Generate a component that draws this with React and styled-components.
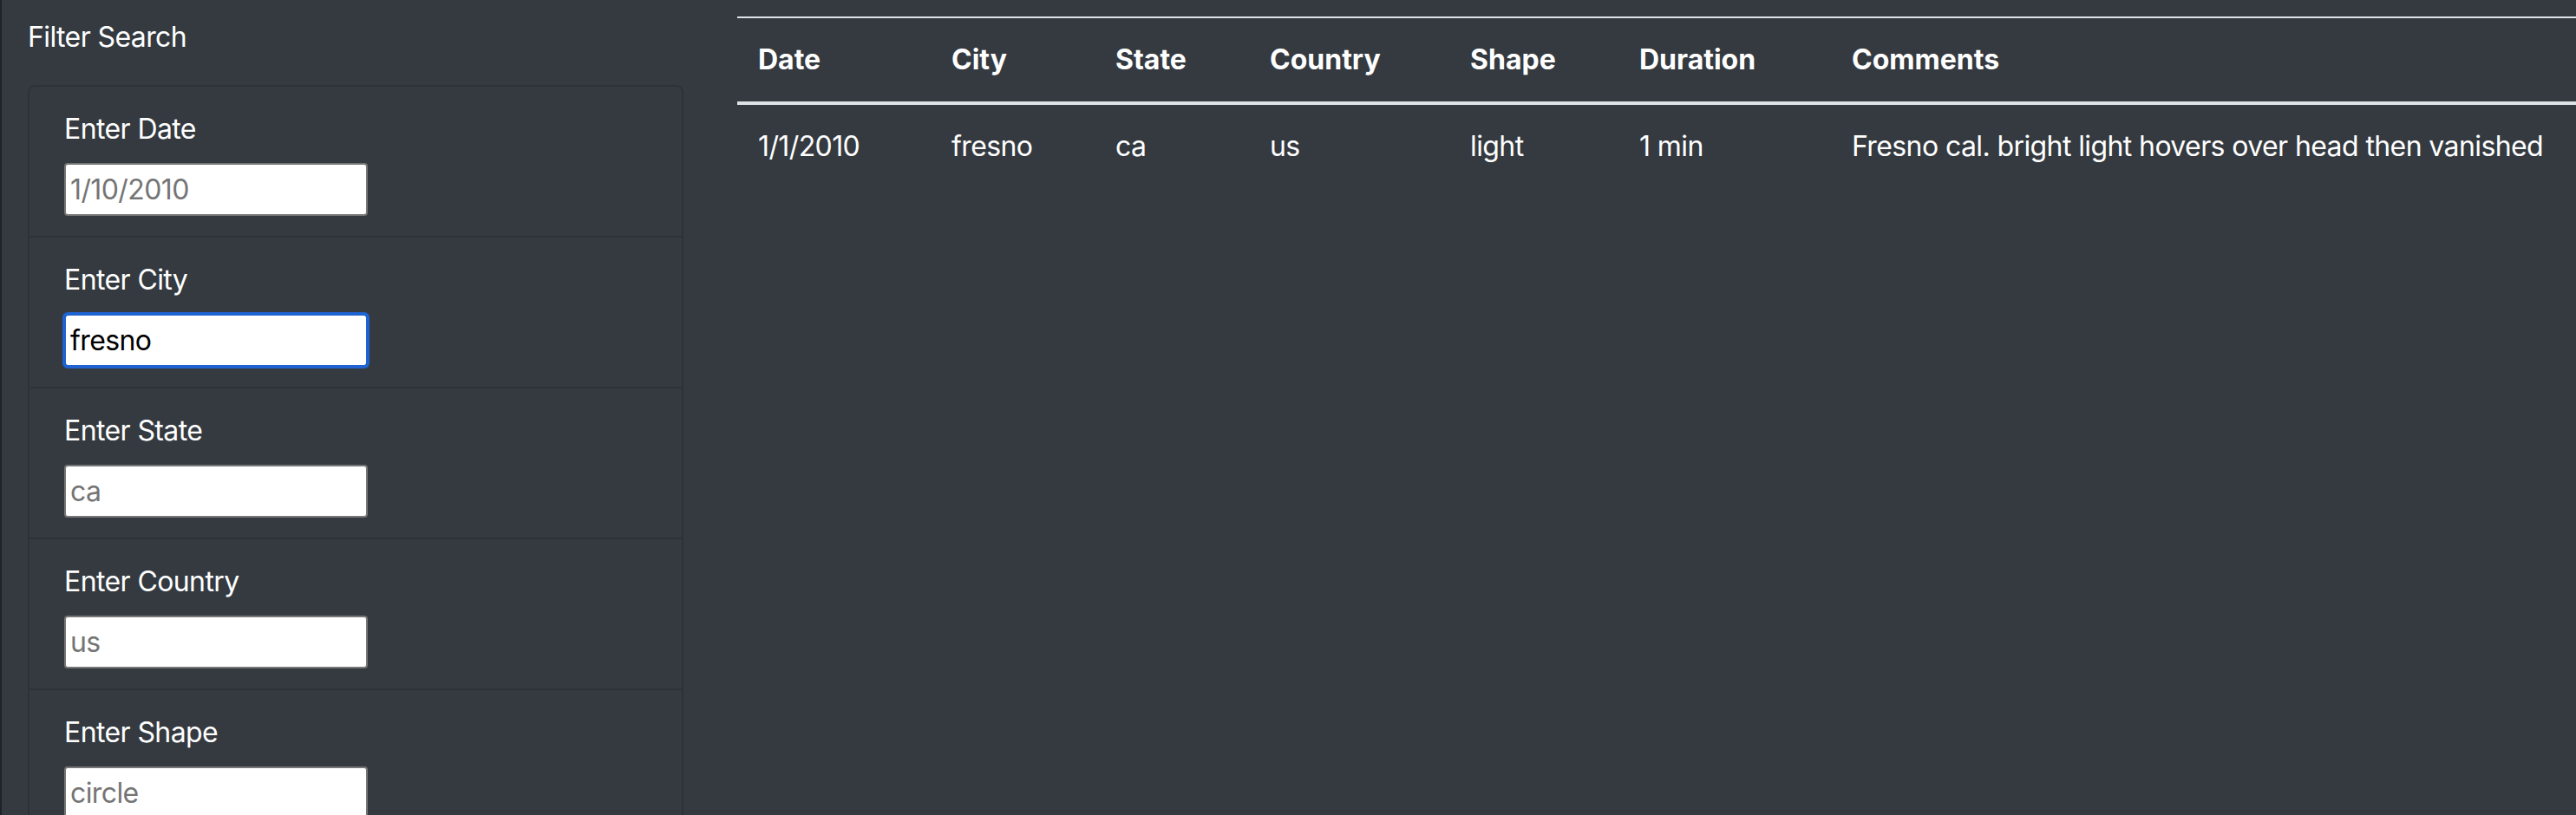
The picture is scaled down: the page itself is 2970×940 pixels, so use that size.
import React from "react";
import styled, { createGlobalStyle } from "styled-components";

const GlobalStyle = createGlobalStyle`
  html, body {
    margin: 0;
    padding: 0;
    background: #343a40;
    overflow: hidden;
  }
  * {
    box-sizing: border-box;
  }
`;

const Page = styled.div`
  display: flex;
  width: 2970px;
  height: 940px;
  background: #343a40;
  border-left: 2px solid #1f2226;
  font-family: "Inter", "Liberation Sans", sans-serif;
  letter-spacing: -0.6px;
  color: #ffffff;
  overflow: hidden;
`;

const Sidebar = styled.aside`
  flex: 0 0 848px;
  padding: 19px 0 0 30px;
`;

const Heading = styled.h4`
  margin: 0 0 31px;
  font-size: 32px;
  font-weight: 400;
  line-height: 48px;
`;

const FilterList = styled.ul`
  width: 756px;
  margin: 0;
  padding: 0;
  list-style: none;
  border: 2px solid rgba(0, 0, 0, 0.125);
  border-radius: 8px;
`;

const FilterItem = styled.li`
  padding: 25px 40px 23px 40px;
  border-top: ${(p) => (p.$first ? "none" : "2px solid rgba(0, 0, 0, 0.125)")};
`;

const Label = styled.label`
  display: block;
  margin-bottom: 15px;
  font-size: 32px;
  line-height: 48px;
`;

const Input = styled.input`
  display: block;
  width: 350px;
  height: 61px;
  padding: 0 5px;
  border: 2px solid #767676;
  border-radius: 4px;
  background: #ffffff;
  color: #000000;
  font-family: inherit;
  font-size: 32px;
  letter-spacing: -0.6px;
  outline: ${(p) => (p.$focused ? "4px solid #1f63d0" : "none")};
  outline-offset: -2px;

  &::placeholder {
    color: #757575;
  }
`;

const Main = styled.main`
  flex: 1;
  padding-top: 19px;
`;

const Table = styled.table`
  width: 100%;
  border-collapse: collapse;
  table-layout: fixed;
`;

const Th = styled.th`
  width: ${(p) => p.$w || "auto"};
  padding: 24px;
  border-top: 2px solid #dee2e6;
  border-bottom: 4px solid #dee2e6;
  text-align: left;
  font-size: 32px;
  font-weight: 700;
  line-height: 48px;
  letter-spacing: 0;
`;

const Td = styled.td`
  padding: 24px;
  font-size: 32px;
  line-height: 48px;
  white-space: nowrap;
`;

const filters = [
  { label: "Enter Date", placeholder: "1/10/2010" },
  { label: "Enter City", value: "fresno", focused: true },
  { label: "Enter State", placeholder: "ca" },
  { label: "Enter Country", placeholder: "us" },
  { label: "Enter Shape", placeholder: "circle" },
];

const columns = [
  { name: "Date", w: "223px" },
  { name: "City", w: "189px" },
  { name: "State", w: "178px" },
  { name: "Country", w: "231px" },
  { name: "Shape", w: "195px" },
  { name: "Duration", w: "245px" },
  { name: "Comments" },
];

const rows = [
  ["1/1/2010", "fresno", "ca", "us", "light", "1 min", "Fresno cal. bright light hovers over head then vanished"],
];

export default function App() {
  return (
    <>
      <GlobalStyle />
      <Page>
        <Sidebar>
          <Heading>Filter Search</Heading>
          <FilterList>
            {filters.map((f, i) => (
              <FilterItem key={f.label} $first={i === 0}>
                <Label>{f.label}</Label>
                <Input
                  type="text"
                  placeholder={f.placeholder}
                  defaultValue={f.value}
                  $focused={f.focused}
                />
              </FilterItem>
            ))}
          </FilterList>
        </Sidebar>
        <Main>
          <Table>
            <thead>
              <tr>
                {columns.map((c) => (
                  <Th key={c.name} $w={c.w}>
                    {c.name}
                  </Th>
                ))}
              </tr>
            </thead>
            <tbody>
              {rows.map((r, i) => (
                <tr key={i}>
                  {r.map((cell, j) => (
                    <Td key={j}>{cell}</Td>
                  ))}
                </tr>
              ))}
            </tbody>
          </Table>
        </Main>
      </Page>
    </>
  );
}
